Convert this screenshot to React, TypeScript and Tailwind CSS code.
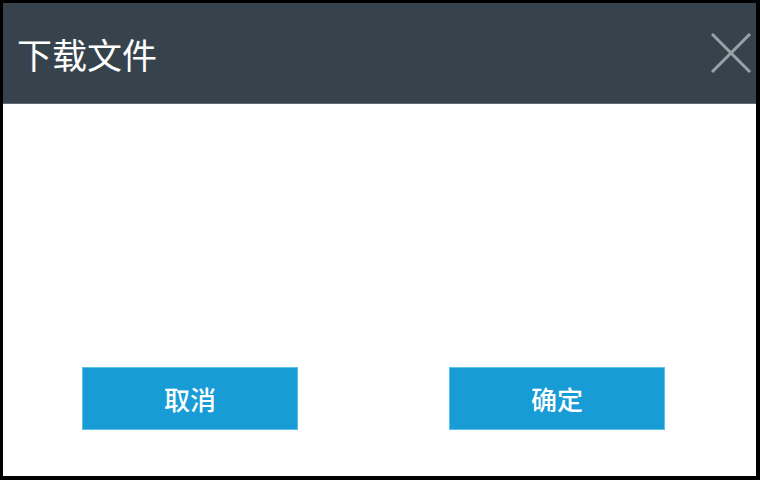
export default function App() {
  return (
    <div className="h-[480px] w-[760px] bg-black pb-[4px] pl-[3px] pr-[4px] pt-[3px]">
      <div className="flex h-full w-full flex-col bg-white font-['Noto_Sans_CJK_SC',sans-serif]">
        <div className="flex h-[101px] items-center justify-between border-b border-[#5d6a73] bg-[#36434d] pl-[14px] pr-[5px]">
          <h1 className="text-[35px] leading-none text-white">下载文件</h1>
          <button className="flex h-[40px] w-[40px] items-center justify-center" aria-label="关闭">
            <svg viewBox="0 0 40 40" className="h-[40px] w-[40px]" stroke="#9aa1a6" strokeWidth="3" fill="none">
              <path d="M1 1 L39 39 M39 1 L1 39" />
            </svg>
          </button>
        </div>
        <div className="flex flex-1 items-end pb-[46px] pl-[79px]">
          <div className="flex gap-[151px]">
            <DialogButton label="取消" />
            <DialogButton label="确定" />
          </div>
        </div>
      </div>
    </div>
  );
}

function DialogButton({ label }: { label: string }) {
  return (
    <button className="flex h-[63px] w-[216px] items-center justify-center border border-[#5fc0e8] bg-[#189cd6] text-[26px] font-medium text-white">
      {label}
    </button>
  );
}
